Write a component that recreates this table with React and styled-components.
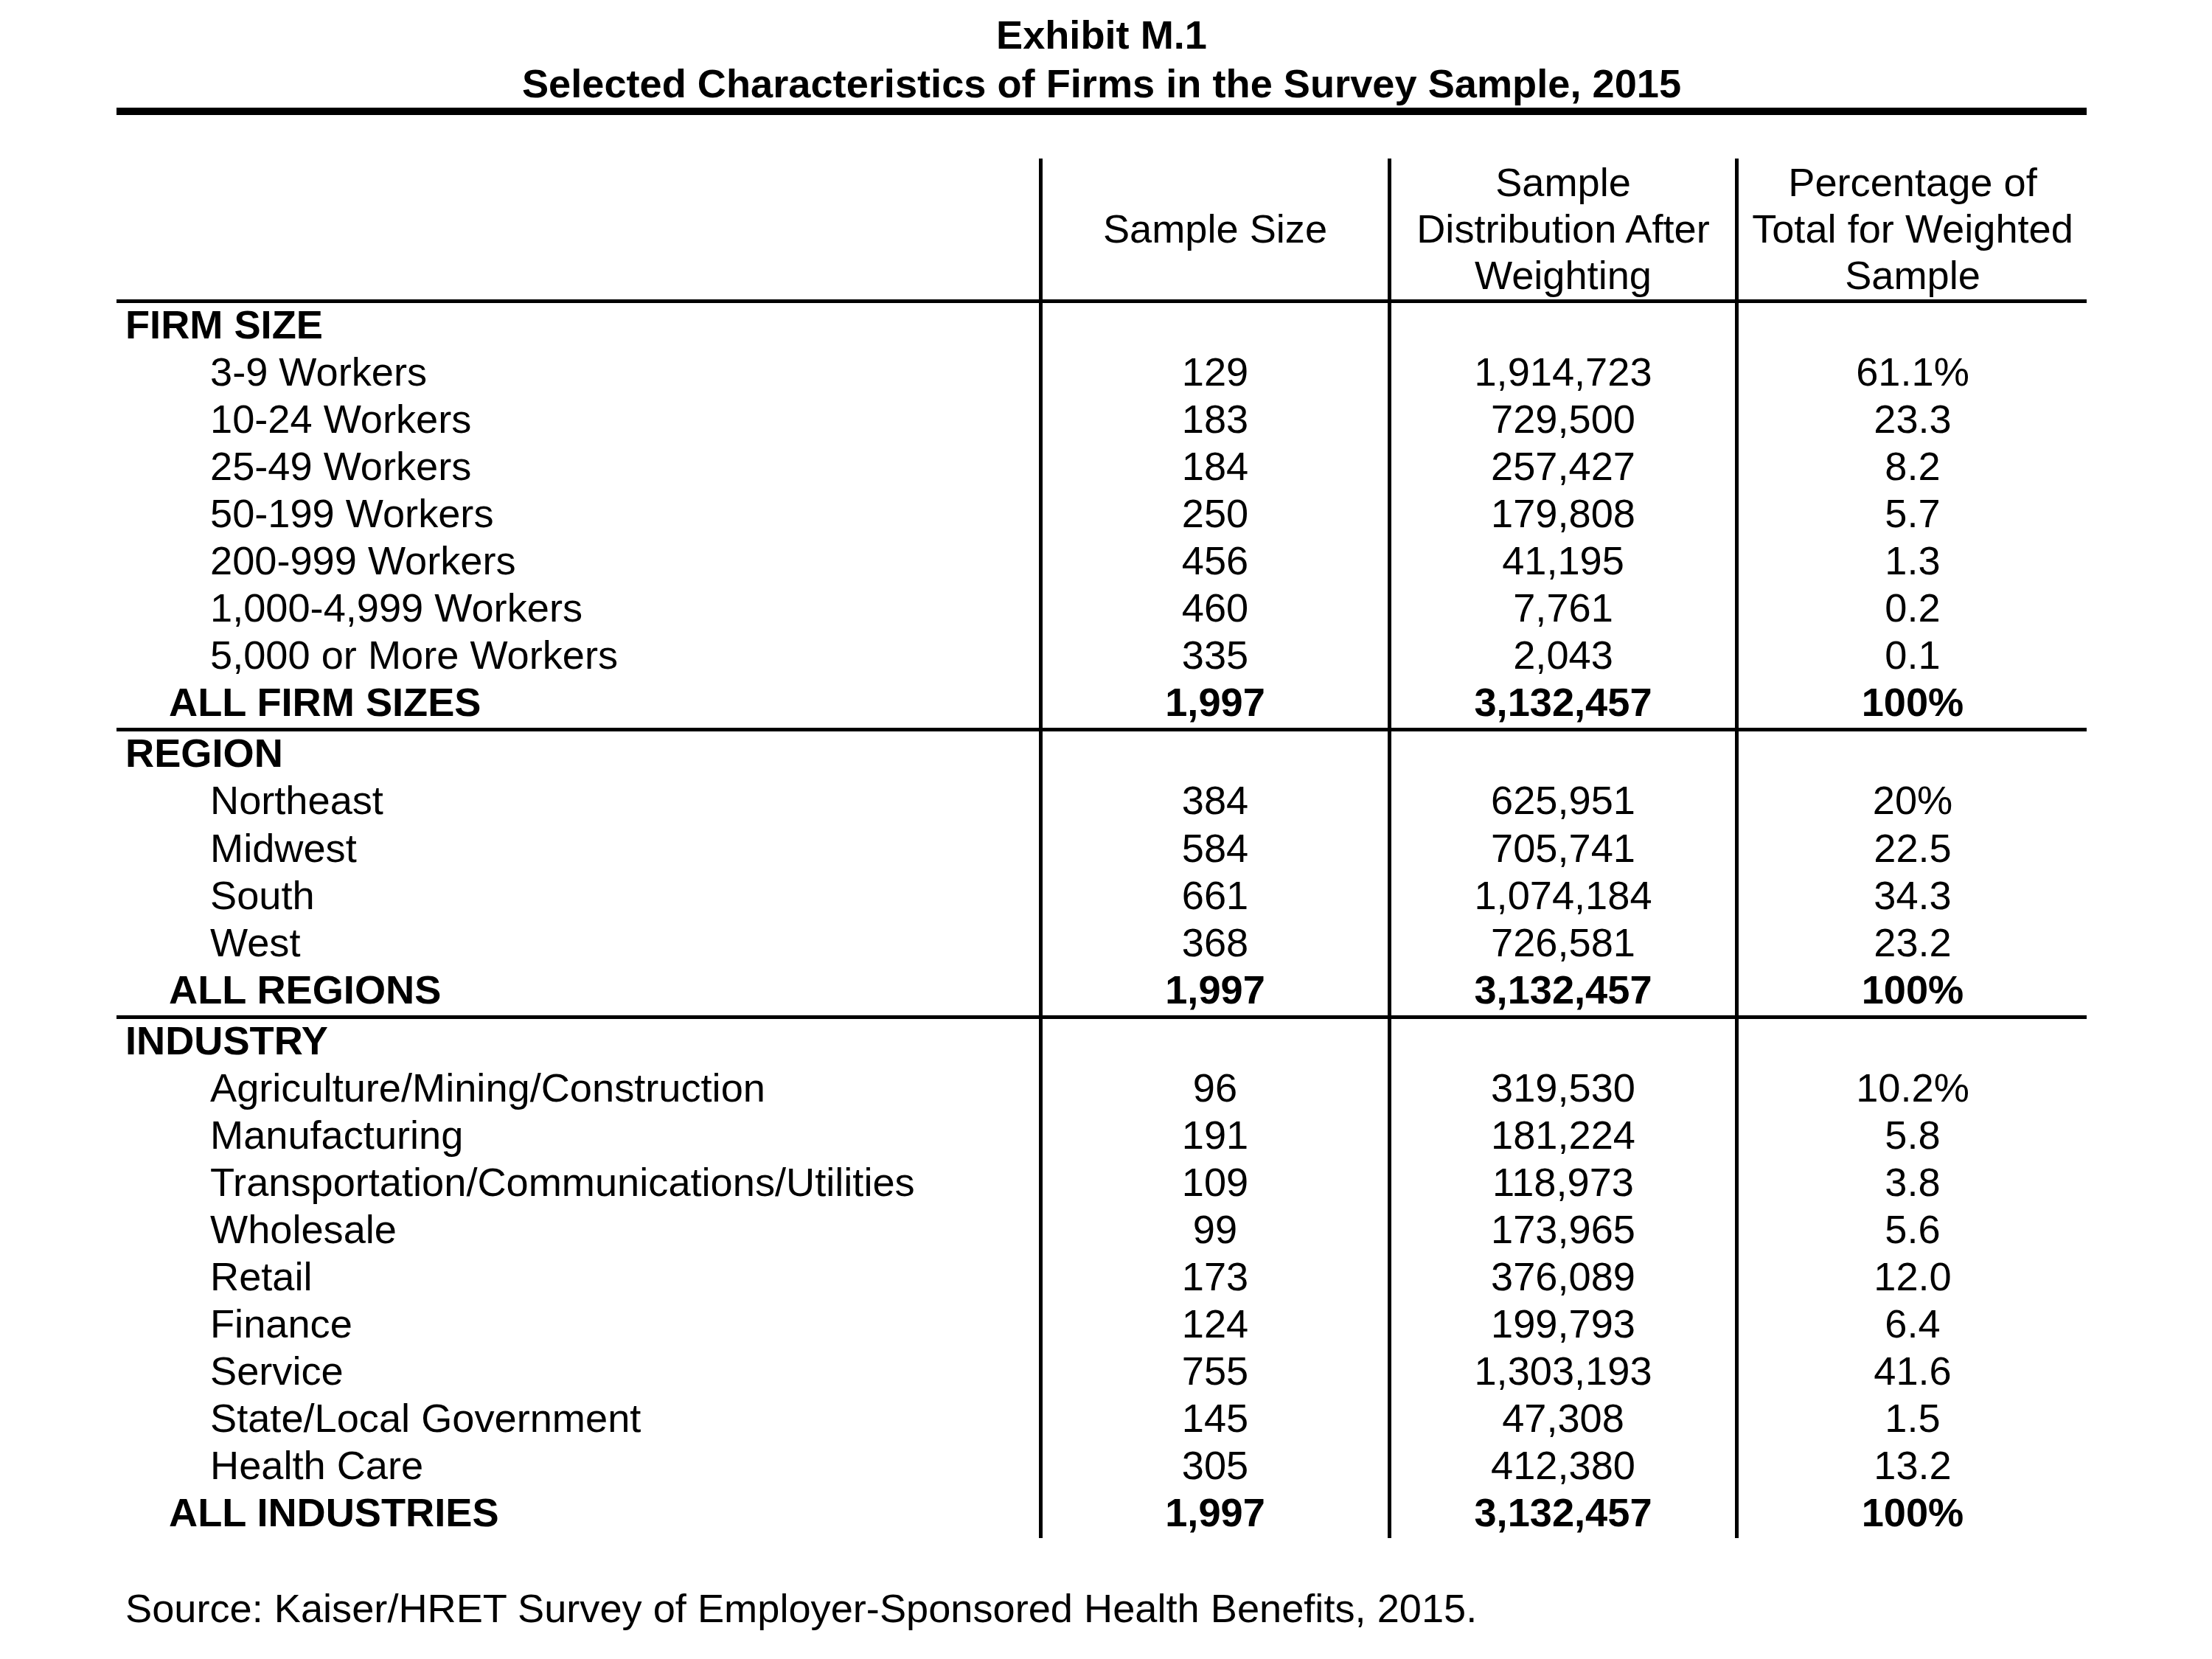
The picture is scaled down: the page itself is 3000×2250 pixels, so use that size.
import React from 'react';
import styled, {createGlobalStyle} from 'styled-components';

const GlobalStyle = createGlobalStyle`
  html, body {
    margin: 0;
    padding: 0;
    background: #FFFFFF;
  }
  body {
    font-family: "Liberation Sans", Arial, sans-serif;
    color: #000000;
  }
`

const COLUMNS = '1251px 473px 471px 477px';

const StyledDivPage = styled.div`
  width: 2672px;
  margin-left: 158px;
  font-size: 54.2px;
`
const StyledH1Title = styled.h1`
  margin: 0;
  padding-top: 14px;
  font-size: 54.2px;
  font-weight: bold;
  line-height: 66px;
  text-align: center;
`
const StyledDivRule = styled.div`
  height: ${props => props.$thick ? '10px' : '5px'};
  background-color: #000000;
`
const StyledDivTable = styled.div`
  margin-top: 59px;
`
const StyledDivHeaderRow = styled.div`
  display: grid;
  grid-template-columns: ${COLUMNS};
  height: 191px;
`
const StyledDivHeadCell = styled.div`
  display: flex;
  align-items: center;
  justify-content: center;
  text-align: center;
  line-height: 63px;
  border-left: ${props => props.$first ? 'none' : '5px solid #000000'};
  box-sizing: border-box;
`
const StyledDivRow = styled.div`
  display: grid;
  grid-template-columns: ${COLUMNS};
  height: 64.05px;
  font-weight: ${props => props.$bold ? 'bold' : 'normal'};
`
const StyledDivLabel = styled.div`
  padding-left: ${props => props.$indent}px;
  line-height: 58px;
  white-space: nowrap;
`
const StyledDivNumber = styled.div`
  border-left: 5px solid #000000;
  box-sizing: border-box;
  text-align: center;
  line-height: 58px;
`
const StyledPSource = styled.p`
  margin: 63px 0 0 0;
  padding-left: 12px;
  line-height: 64px;
`

const sections = [
  {
    title: 'FIRM SIZE',
    rows: [
      ['3-9 Workers', '129', '1,914,723', '61.1%'],
      ['10-24 Workers', '183', '729,500', '23.3'],
      ['25-49 Workers', '184', '257,427', '8.2'],
      ['50-199 Workers', '250', '179,808', '5.7'],
      ['200-999 Workers', '456', '41,195', '1.3'],
      ['1,000-4,999 Workers', '460', '7,761', '0.2'],
      ['5,000 or More Workers', '335', '2,043', '0.1'],
    ],
    total: ['ALL FIRM SIZES', '1,997', '3,132,457', '100%'],
  },
  {
    title: 'REGION',
    rows: [
      ['Northeast', '384', '625,951', '20%'],
      ['Midwest', '584', '705,741', '22.5'],
      ['South', '661', '1,074,184', '34.3'],
      ['West', '368', '726,581', '23.2'],
    ],
    total: ['ALL REGIONS', '1,997', '3,132,457', '100%'],
  },
  {
    title: 'INDUSTRY',
    rows: [
      ['Agriculture/Mining/Construction', '96', '319,530', '10.2%'],
      ['Manufacturing', '191', '181,224', '5.8'],
      ['Transportation/Communications/Utilities', '109', '118,973', '3.8'],
      ['Wholesale', '99', '173,965', '5.6'],
      ['Retail', '173', '376,089', '12.0'],
      ['Finance', '124', '199,793', '6.4'],
      ['Service', '755', '1,303,193', '41.6'],
      ['State/Local Government', '145', '47,308', '1.5'],
      ['Health Care', '305', '412,380', '13.2'],
    ],
    total: ['ALL INDUSTRIES', '1,997', '3,132,457', '100%'],
  },
];

function Row({cells, bold, indent}) {
  return (
    <StyledDivRow $bold={bold}>
      <StyledDivLabel $indent={indent}>{cells[0]}</StyledDivLabel>
      <StyledDivNumber>{cells[1]}</StyledDivNumber>
      <StyledDivNumber>{cells[2]}</StyledDivNumber>
      <StyledDivNumber>{cells[3]}</StyledDivNumber>
    </StyledDivRow>
  );
}

export default function App() {
  return (
    <>
      <GlobalStyle />
      <StyledDivPage>
        <StyledH1Title>
          Exhibit M.1<br />
          Selected Characteristics of Firms in the Survey Sample, 2015
        </StyledH1Title>
        <StyledDivRule $thick />

        <StyledDivTable>
          <StyledDivHeaderRow>
            <StyledDivHeadCell $first />
            <StyledDivHeadCell>Sample Size</StyledDivHeadCell>
            <StyledDivHeadCell>Sample<br />Distribution After<br />Weighting</StyledDivHeadCell>
            <StyledDivHeadCell>Percentage of<br />Total for Weighted<br />Sample</StyledDivHeadCell>
          </StyledDivHeaderRow>
          <StyledDivRule />

          {sections.map((section, i) => (
            <React.Fragment key={section.title}>
              <Row cells={[section.title, '', '', '']} bold indent={12} />
              {section.rows.map(r => (
                <Row key={r[0]} cells={r} indent={127} />
              ))}
              <Row cells={section.total} bold indent={71} />
              {i < sections.length - 1 && <StyledDivRule />}
            </React.Fragment>
          ))}
        </StyledDivTable>

        <StyledPSource>
          Source: Kaiser/HRET Survey of Employer-Sponsored Health Benefits, 2015.
        </StyledPSource>
      </StyledDivPage>
    </>
  );
}
